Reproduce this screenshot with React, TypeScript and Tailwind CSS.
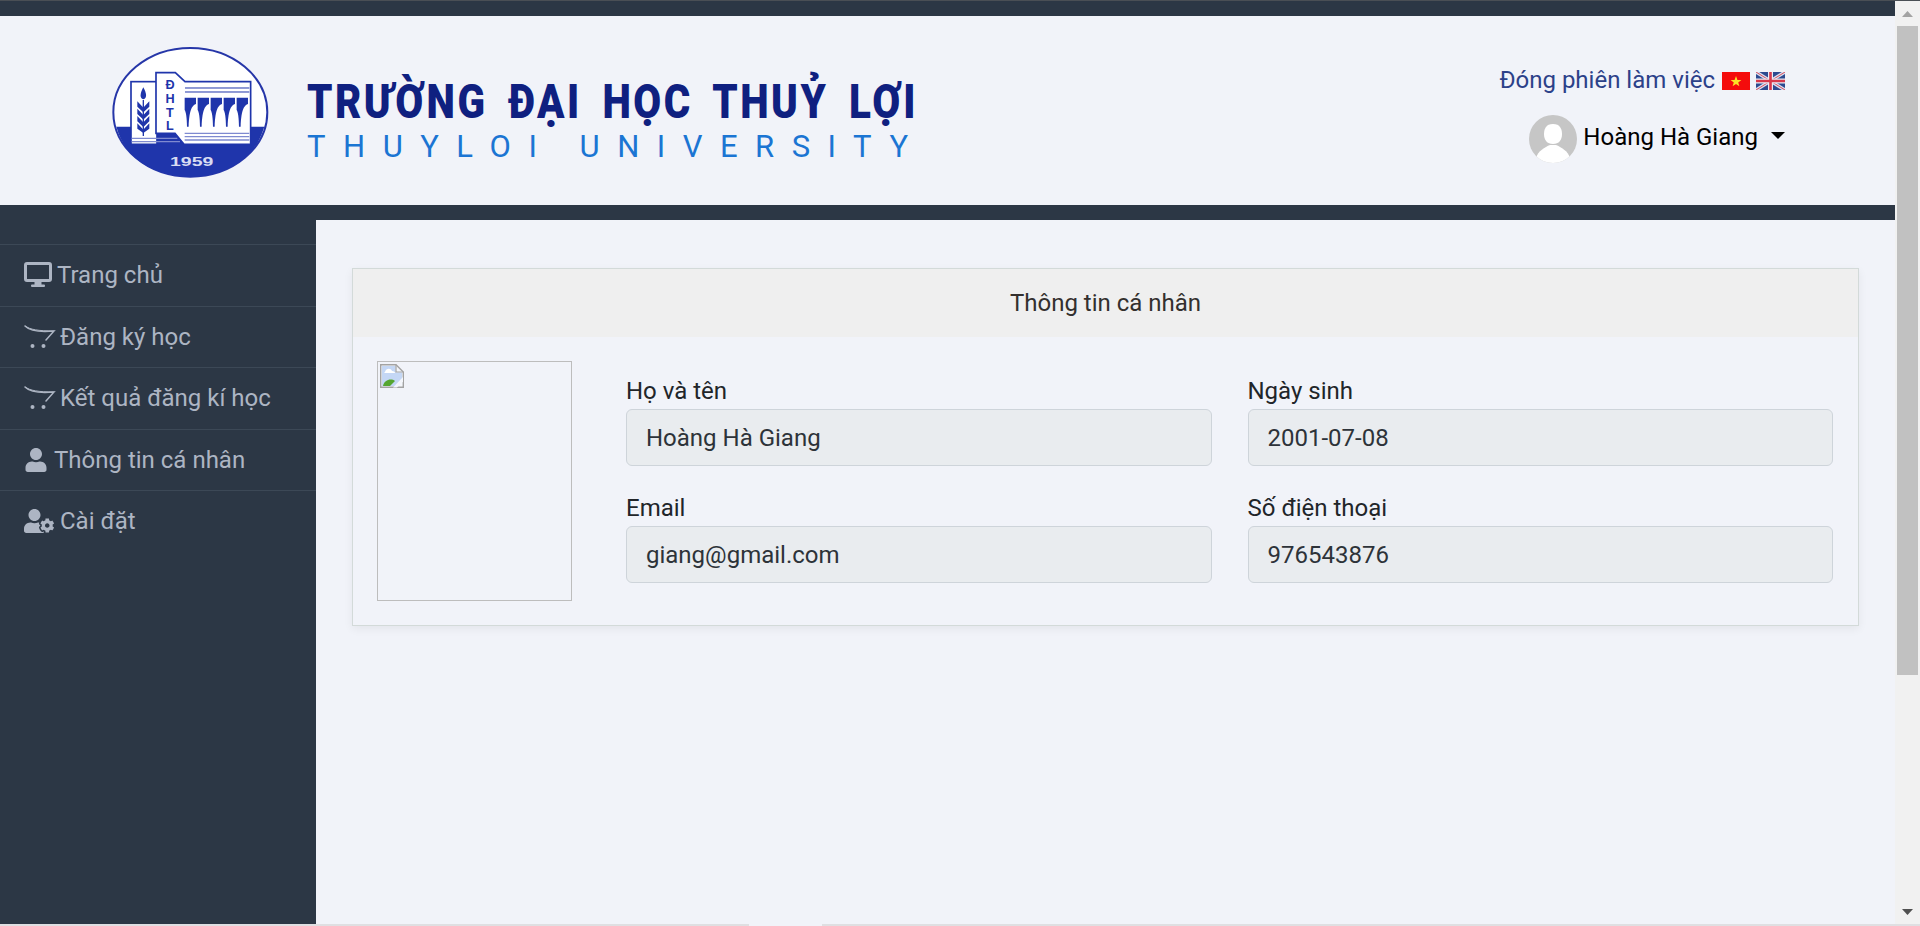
import React from 'react';
import { FaUser, FaUserCog } from 'react-icons/fa';

const Desktop = () => (
  <svg width="28" height="26" viewBox="0 0 28 26" fill="none" className="shrink-0">
    <rect x="1.5" y="1.5" width="25" height="17" rx="1.5" stroke="currentColor" strokeWidth="3" />
    <rect x="10.5" y="19" width="7" height="4" fill="currentColor" />
    <rect x="7" y="22.5" width="14" height="2.4" rx="1" fill="currentColor" />
  </svg>
);

const Cart = () => (
  <svg width="32" height="26" viewBox="0 0 32 26" fill="none" className="shrink-0">
    <path d="M1 2 C6 7 14 8.5 30 7 L22 16" stroke="currentColor" strokeWidth="1.5" strokeLinecap="round" />
    <path d="M1 2 C6 5.5 14 7 30 7" stroke="currentColor" strokeWidth="1" />
    <circle cx="8.5" cy="22" r="2" fill="currentColor" />
    <circle cx="19.5" cy="22" r="2" fill="currentColor" />
  </svg>
);

const menu = [
  { label: 'Trang chủ', icon: <Desktop />, gap: 'gap-[5px]' },
  { label: 'Đăng ký học', icon: <Cart />, gap: 'gap-[4px]' },
  { label: 'Kết quả đăng kí học', icon: <Cart />, gap: 'gap-[4px]' },
  { label: 'Thông tin cá nhân', icon: <FaUser className="w-6 h-6 shrink-0" />, gap: 'gap-[6px]' },
  { label: 'Cài đặt', icon: <FaUserCog className="w-[30px] h-6 shrink-0" />, gap: 'gap-[6px]' },
];

const fields = [
  { label: 'Họ và tên', value: 'Hoàng Hà Giang' },
  { label: 'Ngày sinh', value: '2001-07-08' },
  { label: 'Email', value: 'giang@gmail.com' },
  { label: 'Số điện thoại', value: '976543876' },
];

// logo drawn in 3x coordinates, wordmark in real pixels
const Logo = () => (
  <svg width="900" height="160" viewBox="0 0 900 160" className="block shrink-0 overflow-visible">
    <g transform="scale(0.3333)">
      <ellipse cx="301" cy="247" rx="231" ry="193" fill="#fff" stroke="#2636a8" strokeWidth="6" />
      <path d="M79 290 H523 C495 390 400 440 301 440 C200 440 105 390 79 290 Z" fill="#1f35ab" />
      <rect x="123" y="155" width="78" height="188" fill="#fff" stroke="#1f35ab" strokeWidth="5" />
      <path d="M198 128 H256 L285 155 H482 V343 H282 L255 310 H198 Z" fill="#fff" stroke="#1f35ab" strokeWidth="5" />
      <path d="M160 172 C170 190 172 205 160 208 C148 205 150 190 160 172 Z" fill="#1f35ab" />
      <path d="M160 210 V318" stroke="#1f35ab" strokeWidth="4" />
      <path d="M142 214 L159 232 V246 L142 230 Z M178 214 L161 232 V246 L178 230 Z M142 236 L159 254 V268 L142 252 Z M178 236 L161 254 V268 L178 252 Z M142 258 L159 276 V290 L142 274 Z M178 258 L161 276 V290 L178 274 Z M142 280 L159 298 V308 L142 296 Z M178 280 L161 298 V308 L178 296 Z" fill="#1f35ab" />
      <g fill="#1f35ab" fontFamily="'Liberation Sans', sans-serif" fontWeight="700" fontSize="38" textAnchor="middle">
        <text x="240" y="178">Đ</text>
        <text x="240" y="220">H</text>
        <text x="240" y="261">T</text>
        <text x="240" y="301">L</text>
      </g>
      <path d="M285 174 H478" stroke="#1f35ab" strokeWidth="3" />
      <path d="M285 186 H478" stroke="#1f35ab" strokeWidth="3" />
      {[284, 323, 362, 401, 440].map((x) => (
        <path key={x} d={`M${x} 203 H${x + 34} V222 C${x + 24} 226 ${x + 14} 235 ${x + 12} 290 H${x + 7} C${x + 7} 265 ${x + 4} 245 ${x} 240 Z`} fill="#1f35ab" />
      ))}
      <path d="M284 310 H478 M284 320 H478 M284 330 H478" stroke="#7f8ad0" strokeWidth="4" />
      <path d="M125 325 H262 M125 335 H270" stroke="#7f8ad0" strokeWidth="4" />
      <text x="240" y="407" fill="#d8dcf2" fontFamily="'Liberation Sans', sans-serif" fontWeight="700" fontSize="38" textLength="130" lengthAdjust="spacingAndGlyphs">1959</text>
    </g>
    <text x="217" y="88" fontFamily="Roboto, sans-serif" fontWeight="900" fontSize="49" letterSpacing="3" wordSpacing="10" fill="#0f2080" textLength="611" lengthAdjust="spacingAndGlyphs">TRƯỜNG ĐẠI HỌC THUỶ LỢI</text>
    <text x="217" y="127" fontFamily="Roboto, sans-serif" fontWeight="400" fontSize="31" fill="#1b75d3" textLength="601" lengthAdjust="spacing">THUYLOI UNIVERSITY</text>
  </svg>
);

const FlagVN = () => (
  <svg width="28" height="18" viewBox="0 0 28 18" className="block">
    <rect width="28" height="18" fill="#f40c0c" />
    <path d="M14 4 L15.4 8 H19.4 L16.2 10.4 L17.4 14.2 L14 11.9 L10.6 14.2 L11.8 10.4 L8.6 8 H12.6 Z" fill="#fbe426" />
  </svg>
);

const FlagUK = () => (
  <svg width="29" height="18" viewBox="0 0 29 18" className="block">
    <rect width="29" height="18" fill="#2d4a8f" />
    <path d="M0 0 L29 18 M29 0 L0 18" stroke="#d9dff0" strokeWidth="3.4" />
    <path d="M0 0 L29 18 M29 0 L0 18" stroke="#d8505f" strokeWidth="1" />
    <path d="M14.5 0 V18 M0 9 H29" stroke="#e8ecf6" strokeWidth="5" />
    <path d="M14.5 0 V18 M0 9 H29" stroke="#d8384a" strokeWidth="2.6" />
  </svg>
);

const Avatar = () => (
  <svg width="48" height="48" viewBox="0 0 48 48" className="block">
    <defs>
      <clipPath id="av"><circle cx="24" cy="24" r="24" /></clipPath>
    </defs>
    <circle cx="24" cy="24" r="24" fill="#c6c6c6" />
    <g clipPath="url(#av)" fill="#fff">
      <path d="M24 9 C31 9 33 14 33 19 C33 25 30 29 24 29 C18 29 15 25 15 19 C15 14 17 9 24 9 Z" />
      <path d="M7 43 C9 36 16 32 21 30 H27 C32 32 39 36 41 43 L38 48 H10 Z" />
    </g>
  </svg>
);

const BrokenImage = () => (
  <svg width="24" height="24" viewBox="0 0 24 24" className="block">
    <path d="M0.7 0.7 H16 L23.3 8 V23.3 H0.7 Z" fill="#f4f6fb" stroke="#a3a3a3" strokeWidth="1.4" />
    <path d="M2 2 H15.5 V8.5 H22 V15 L15 22 H2 Z" fill="#c4d7f5" />
    <path d="M5 8 C6 4 11 4 12 7 C14 7 15 8 15 9 H4 Z" fill="#fff" />
    <path d="M3 22 C4 16 11 14 15 17 L10 22 Z" fill="#55a630" />
    <path d="M23 13 L13 23.5 H17 L23 17.5 Z" fill="#f4f6fb" />
    <path d="M16 0.7 V8 H23.3" fill="none" stroke="#a3a3a3" strokeWidth="1.2" />
  </svg>
);

export default function App() {
  return (
    <div className="h-[926px] w-full overflow-hidden flex flex-col bg-[#f1f3f9] text-[24px] leading-9 text-[#212529] font-['Roboto',sans-serif]">
      <div className="h-px bg-[#4a4f55] shrink-0" />
      <div className="flex-1 flex min-h-0">
        <div className="flex-1 min-w-0 flex flex-col">
          <div className="h-[15px] bg-[#2c3745] shrink-0" />

          <header className="h-[189px] shrink-0 flex justify-between pl-[90px] pr-[110px] pt-[14px]">
            <Logo />
            <div className="flex flex-col items-end pt-[32px]">
              <div className="flex items-center gap-[7px] text-[#2c4189]">
                <span>Đóng phiên làm việc</span>
                <div className="flex gap-[6px] mt-[2px]">
                  <FlagVN />
                  <FlagUK />
                </div>
              </div>
              <div className="flex items-center mt-[17px] text-black">
                <Avatar />
                <span className="ml-[6px] -mt-[5px]">Hoàng Hà Giang</span>
                <svg width="14" height="7" viewBox="0 0 14 7" className="ml-[13px] -mt-[8px]">
                  <path d="M0 0 H14 L7 7 Z" fill="#000" />
                </svg>
              </div>
            </div>
          </header>

          <div className="flex-1 flex min-h-0">
            <aside className="w-[316px] shrink-0 bg-[#2c3745] pt-[39px] text-[#adb5c3]">
              {menu.map((m) => (
                <div key={m.label} className={`h-[61.5px] border-t-[1.5px] border-[#3c4856] flex items-center pl-[24px] ${m.gap}`}>
                  {m.icon}
                  <span>{m.label}</span>
                </div>
              ))}
            </aside>

            <div className="flex-1 min-w-0 flex flex-col">
              <div className="h-[15px] bg-[#2c3745] shrink-0" />
              <main className="flex-1 pt-[48px] px-[36px]">
                <div className="border-[1.5px] border-[#d3dad9] shadow-[0_3px_9px_rgba(0,0,0,0.06)]">
                  <div className="h-[67.5px] bg-[#efefef] flex items-center justify-center text-[#33302e]">
                    Thông tin cá nhân
                  </div>
                  <div className="flex pt-[24px] pb-[24.5px] pl-[24px] pr-[25px]">
                    <div className="w-[195px] h-[240px] shrink-0 border-[1.5px] border-[#bdbdbd] pl-[2px] pt-[2.5px]">
                      <BrokenImage />
                    </div>
                    <div className="flex-1 grid grid-cols-2 content-start gap-x-[36px] gap-y-[24px] pl-[54px] pt-[12px]">
                      {fields.map((f) => (
                        <div key={f.label}>
                          <div className="h-9">{f.label}</div>
                          <div className="h-[57px] bg-[#e9ecef] border-[1.5px] border-[#ced4da] rounded-[6px] pl-[19px] pr-[18px] pt-[1px] flex items-center text-[#2d3339]">
                            {f.value}
                          </div>
                        </div>
                      ))}
                    </div>
                  </div>
                </div>
              </main>
            </div>
          </div>
        </div>

        {/* scrollbar */}
        <div className="w-[25px] shrink-0 bg-[#f1f1f1] flex flex-col items-center">
          <div className="h-[25px] flex items-center justify-center">
            <svg width="11" height="6" viewBox="0 0 11 6"><path d="M5.5 0 L11 6 H0 Z" fill="#a3a3a3" /></svg>
          </div>
          <div className="w-[21px] h-[649px] bg-[#c1c1c1]" />
          <div className="mt-auto h-[25px] flex items-center justify-center">
            <svg width="11" height="6" viewBox="0 0 11 6"><path d="M0 0 H11 L5.5 6 Z" fill="#505050" /></svg>
          </div>
        </div>
      </div>
      <div className="h-[2px] shrink-0 flex">
        <div className="w-[749px] bg-[#dfdfe2]" />
        <div className="w-[73px]" />
        <div className="flex-1 bg-[#dfdfe2]" />
      </div>
    </div>
  );
}
